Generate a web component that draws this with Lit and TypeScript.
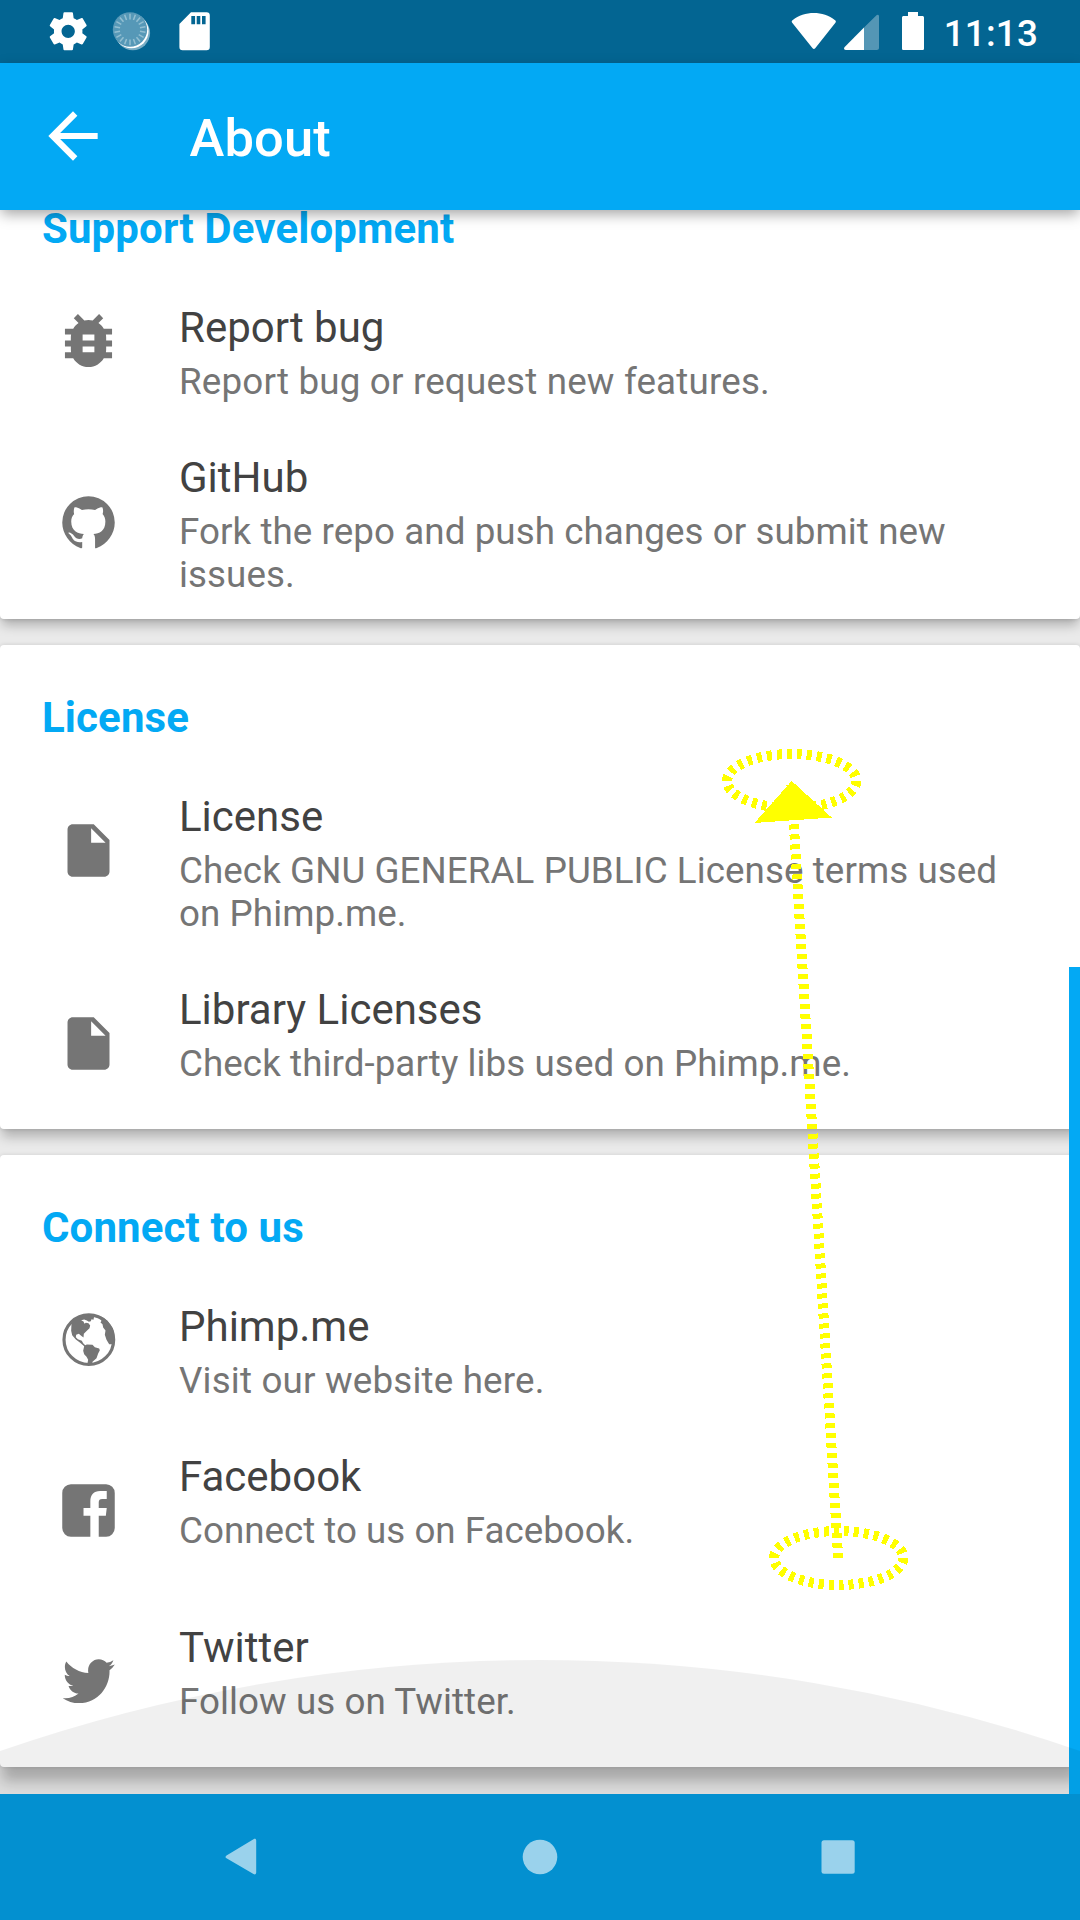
import { LitElement, html, svg, css, SVGTemplateResult } from "lit";
import { customElement, property } from "lit/decorators.js";

type IconName = "bug" | "github" | "file" | "globe" | "facebook" | "twitter";
type IconAlign = "high" | "mid" | "low";
type Tracking = "tight" | "normal" | "wide";

interface LinkRow {
  icon: IconName;
  align: IconAlign;
  title: string;
  text: string;
  tracking?: Tracking;
}

interface Section {
  heading: string;
  kind: string;
  rows: LinkRow[];
}

const SECTIONS: Section[] = [
  {
    heading: "Support Development",
    kind: "support",
    rows: [
      { icon: "bug", align: "high", title: "Report bug", text: "Report bug or request new features.", tracking: "wide" },
      { icon: "github", align: "low", title: "GitHub", text: "Fork the repo and push changes or submit new issues." },
    ],
  },
  {
    heading: "License",
    kind: "license",
    rows: [
      { icon: "file", align: "mid", title: "License", text: "Check GNU GENERAL PUBLIC License terms used on Phimp.me." },
      { icon: "file", align: "mid", title: "Library Licenses", text: "Check third-party libs used on Phimp.me." },
    ],
  },
  {
    heading: "Connect to us",
    kind: "connect",
    rows: [
      { icon: "globe", align: "high", title: "Phimp.me", text: "Visit our website here.", tracking: "wide" },
      { icon: "facebook", align: "mid", title: "Facebook", text: "Connect to us on Facebook.", tracking: "tight" },
      { icon: "twitter", align: "mid", title: "Twitter", text: "Follow us on Twitter." },
    ],
  },
];

const ICONS: Record<IconName, { box: string; body: SVGTemplateResult }> = {
  bug: {
    box: "1.3 1.3 21.4 21.4",
    body: svg`<path d="M20 8h-2.81c-.45-.78-1.07-1.45-1.82-1.96L17 4.41 15.59 3l-2.17 2.17C12.96 5.06 12.49 5 12 5c-.49 0-.96.06-1.41.17L8.41 3 7 4.41l1.62 1.63C7.88 6.55 7.26 7.22 6.81 8H4v2h2.09c-.05.33-.09.66-.09 1v1H4v2h2v1c0 .34.04.67.09 1H4v2h2.81c1.04 1.79 2.97 3 5.19 3s4.15-1.21 5.19-3H20v-2h-2.09c.05-.33.09-.66.09-1v-1h2v-2h-2v-1c0-.34-.04-.67-.09-1H20V8zm-6 8h-4v-2h4v2zm0-4h-4v-2h4v2z"/>`,
  },
  github: {
    box: "0 0 24 24",
    body: svg`<path d="M12 2A10 10 0 0 0 2 12c0 4.42 2.87 8.17 6.84 9.7.5.18.76.1.76-.2v-2.1c-2.9.5-3.6-1.3-4-1.9-.3-.6-.7-1-1.1-1.3-.5-.4.4-.6 1 .0.9.4 1.2 1.5 1.9 1.8.8.4 1.6.3 2.2.0.05-.7.3-1.3.67-1.6C7.95 16.17 5.42 15.31 5.42 11.6c0-1.11.4-2.1 1.13-2.81-.1-.25-.35-1.29.1-2.54 0 0 .94-.28 2.85 1.01.79-.22 1.65-.33 2.5-.33s1.71.11 2.5.33c1.91-1.29 2.8-1.01 2.8-1.01.5 1.25.15 2.29.05 2.54.65.71 1.08 1.7 1.08 2.81 0 3.72-2.34 4.56-4.57 4.81.36.31.64.92.64 1.85v3.34c0 .27.16.3.67.1C19.14 20.16 22 16.42 22 12A10 10 0 0 0 12 2z"/>`,
  },
  file: {
    box: "0 0 24 24",
    body: svg`<path d="M6 2c-1.1 0-1.99.9-1.99 2L4 20c0 1.1.89 2 1.99 2H18c1.1 0 2-.9 2-2V8l-6-6H6zm7 7V3.5L18.5 9H13z"/>`,
  },
  globe: {
    box: "22.5 7.5 189 189",
    body: svg`
      <circle cx="118" cy="102.5" r="74.5" fill="none" stroke="currentColor" stroke-width="9.5"/>
      <path d="M80 38L66 54 65 76 68 89 79 102 92 112 104 122 101 136 104 146 111 154 116 163 113 178 127 178 129 169 141 158 146 144 151 134 149 129 136 125 129 118 112 117 107 119 101 113 97 106 85 101 79 95 80 88 88 85 95 91 102 96 103 85 112 76 120 68 122 60 117 53 109 52 105 55 102 48 95 44 104 42 112 45 118 49 124 47 126 41 132 43 134 32 122 29 92 34z"/>
      <path d="M140 31L152 40 156 46 153 51 159 56 161 66 168 75 166 88 171 103 179 116 192 116 196 98 190 68 174 46 156 34z"/>`,
  },
  facebook: {
    box: "0 0 24 24",
    body: svg`<path fill-rule="evenodd" d="M5.3 2h13.4A3.3 3.3 0 0 1 22 5.3v13.4a3.3 3.3 0 0 1-3.3 3.3H15.9v-8h2.7l.35-3H15.9V8.9c0-.9.4-1.3 1.3-1.3h1.75v-3H16.4c-2.4 0-3.7 1.5-3.7 3.9V11h-2.6v3h2.6v8H5.3A3.3 3.3 0 0 1 2 18.7V5.3A3.3 3.3 0 0 1 5.3 2z"/>`,
  },
  twitter: {
    box: "0 0 24 24",
    body: svg`<path transform="translate(.7 -.35) scale(.95 .98)" d="M22.46 6c-.77.35-1.6.58-2.46.69.88-.53 1.56-1.37 1.88-2.38-.83.5-1.75.85-2.72 1.05C18.37 4.5 17.26 4 16 4c-2.35 0-4.27 1.92-4.27 4.29 0 .34.04.67.11.98C8.28 9.09 5.11 7.38 3 4.79c-.37.63-.58 1.37-.58 2.15 0 1.49.75 2.81 1.91 3.56-.71 0-1.37-.2-1.95-.5v.03c0 2.08 1.48 3.82 3.44 4.21-.36.1-.74.15-1.13.15-.27 0-.54-.03-.8-.08.54 1.69 2.11 2.95 4 2.98-1.46 1.16-3.31 1.84-5.33 1.84-.34 0-.68-.02-1.02-.06C3.44 20.29 5.7 21 8.12 21 16 21 20.33 14.46 20.33 8.79c0-.19 0-.37-.01-.56.84-.6 1.56-1.36 2.14-2.23z"/>`,
  },
};

/** Android status bar with notification icons on the left, signals and clock on the right. */
@customElement("status-bar")
class StatusBar extends LitElement {
  static styles = css`
    :host {
      display: flex;
      justify-content: space-between;
      height: 63px;
      background: #036592;
      color: #fff;
      font: 500 36.75px/43px Roboto, sans-serif;
    }
    svg { display: block; flex: none; }
    .right { display: flex; }
    .clock { padding: 12px 42px 0 0; letter-spacing: 0.2px; white-space: nowrap; }
  `;

  render() {
    const ticks = Array.from({ length: 18 }, (_, i) => i * 20);
    return html`
      <svg width="220" height="63" viewBox="0 0 220 63" fill="#fff">
        <g transform="translate(45.4 8.5) scale(1.9)">
          <path d="M19.43 12.98c.04-.32.07-.64.07-.98s-.03-.66-.07-.98l2.11-1.65c.19-.15.24-.42.12-.64l-2-3.46c-.12-.22-.39-.3-.61-.22l-2.49 1c-.52-.4-1.08-.73-1.69-.98l-.38-2.65C14.46 2.18 14.25 2 14 2h-4c-.25 0-.46.18-.49.42l-.38 2.65c-.61.25-1.17.59-1.69.98l-2.49-1c-.23-.09-.49 0-.61.22l-2 3.46c-.13.22-.07.49.12.64l2.11 1.65c-.04.32-.07.65-.07.98s.03.66.07.98l-2.11 1.65c-.19.15-.24.42-.12.64l2 3.46c.12.22.39.3.61.22l2.49-1c.52.4 1.08.73 1.69.98l.38 2.65c.03.24.24.42.49.42h4c.25 0 .46-.18.49-.42l.38-2.65c.61-.25 1.17-.59 1.69-.98l2.49 1c.23.09.49 0 .61-.22l2-3.46c.12-.22.07-.49-.12-.64l-2.11-1.65zM12 15.5c-1.93 0-3.5-1.57-3.5-3.5s1.57-3.5 3.5-3.5 3.5 1.57 3.5 3.5-1.57 3.5-3.5 3.5z"/>
        </g>
        <circle cx="132.8" cy="33" r="17.3" fill="#78adc5"/>
        <circle cx="131.4" cy="31" r="17.2"/>
        <circle cx="130" cy="29.5" r="17.2" fill="#5698b7"/>
        ${ticks.map((a) => svg`<path d="M130 13.8v5.6" stroke="#93bfd2" stroke-width="1.5" transform="rotate(${a} 130 29.5)"/>`)}
        <path fill-rule="evenodd" d="M191 12.3h15.6a3.2 3.2 0 0 1 3.2 3.2v31.6a3.2 3.2 0 0 1-3.2 3.2h-24a3.2 3.2 0 0 1-3.2-3.2V24zM191.3 16v8.3h3.8V16zM196.7 16v8.3h3.6V16zM202 16v8.3h3.6V16z"/>
      </svg>
      <div class="right">
        <svg width="154" height="63" viewBox="790 0 154 63" fill="#fff">
          <path d="M792.2 22.8c-.8-1-.6-1.800.3-2.500 12-9.700 30.600-9.700 42.600 0 .9.700 1.100 1.500.3 2.500L815.200 48.300c-.8 1-1.800 1-2.600 0z"/>
          <path d="M876.500 15.300c1-1 2.500-.5 2.500 1v31.500c0 1.400-.8 2.200-2.200 2.200H864V27.500z" opacity=".32"/>
          <path d="M864 27.500V50h-18c-2 0-2.600-1.500-1.300-3z"/>
          <path d="M908 12h10v4h4.400c.9 0 1.600.7 1.600 1.600v30.800c0 .9-.7 1.600-1.600 1.600h-18.800c-.9 0-1.600-.7-1.600-1.600V17.600c0-.9.7-1.600 1.600-1.600H908z"/>
        </svg>
        <span class="clock">11:13</span>
      </div>
    `;
  }
}

/** One card of the about list. */
@customElement("about-card")
class AboutCard extends LitElement {
  @property({ attribute: false }) section!: Section;

  static styles = css`
    :host { display: block; flex: none; }
    .card {
      background: #fff;
      border-radius: 4px;
      padding: 48px 42px 44px;
      font-family: Roboto, sans-serif;
      box-shadow: 0 8px 12px -2px rgba(0, 0, 0, 0.26), 0 0 4px rgba(0, 0, 0, 0.16);
    }
    .support { padding-bottom: 23px; }
    .license { box-shadow: 0 10px 12px -2px rgba(0, 0, 0, 0.24), 0 0 4px rgba(0, 0, 0, 0.14); }
    .connect { box-shadow: 0 16px 14px -2px rgba(0, 0, 0, 0.24), 0 0 4px rgba(0, 0, 0, 0.12); }
    .heading {
      margin: 0 0 50px;
      font-size: 42px;
      font-weight: 700;
      line-height: 49px;
      letter-spacing: 0.12px;
      color: #03a9f4;
    }
    .rows { display: flex; flex-direction: column; gap: 50px; }
    .row { display: flex; align-items: flex-start; color: #757575; }
    .connect .row:last-child { margin-top: 20.5px; }
    /* The icon may hang lower than the two text lines without stretching its row. */
    .icon {
      flex: none;
      width: 63px;
      height: 63px;
      margin: 0 59px -40px 15px;
      fill: currentColor;
    }
    .high { margin-top: 6px; }
    .mid { margin-top: 27px; }
    .low { margin-top: 38px; }
    .title { font-size: 42px; line-height: 49px; color: #424242; }
    .text { margin-top: 8px; font-size: 36.75px; line-height: 43px; }
    .normal { letter-spacing: 0.07px; }
    .wide { letter-spacing: 0.18px; }
  `;

  render() {
    const s = this.section;
    return html`
      <section class="card ${s.kind}">
        <h2 class="heading">${s.heading}</h2>
        <div class="rows">
          ${s.rows.map(
            (r) => html`
              <div class="row">
                <svg class="icon ${r.align}" viewBox=${ICONS[r.icon].box}>${ICONS[r.icon].body}</svg>
                <div>
                  <div class="title">${r.title}</div>
                  <div class="text ${r.tracking ?? "normal"}">${r.text}</div>
                </div>
              </div>
            `
          )}
        </div>
      </section>
    `;
  }
}

@customElement("app-root")
class AppRoot extends LitElement {
  static styles = css`
    :host {
      display: flex;
      flex-direction: column;
      position: relative;
      width: 1080px;
      height: 1920px;
      overflow: hidden;
      background: #eaeaea;
      font-family: Roboto, sans-serif;
    }
    status-bar { flex: none; }
    .appbar {
      flex: none;
      display: flex;
      align-items: center;
      height: 147px;
      background: #03a9f4;
      color: #fff;
      z-index: 1;
      box-shadow: 0 5px 13px -1px rgba(0, 0, 0, 0.36);
    }
    .back { width: 74px; height: 74px; margin: 0 80px 1px 35.5px; fill: #fff; }
    .page-title {
      margin: 3px 0 0;
      font-size: 52.5px;
      font-weight: 500;
      line-height: 62px;
      letter-spacing: 0.1px;
    }
    .content {
      flex: 1;
      min-height: 0;
      display: flex;
      flex-direction: column;
      gap: 26px;
      position: relative;
      overflow: hidden;
    }
    .content about-card:first-child { margin-top: -54px; }
    .scrollbar {
      position: absolute;
      right: 0;
      bottom: 0;
      width: 11px;
      height: 827px;
      background: #03a9f4;
    }
    .glow { position: absolute; left: 0; bottom: 0; width: 1080px; height: 134px; }
    .navbar {
      flex: none;
      display: flex;
      justify-content: space-between;
      align-items: center;
      height: 126px;
      padding: 0 208px;
      box-sizing: border-box;
      background: #0390d0;
      fill: rgba(255, 255, 255, 0.6);
    }
    .navbar svg { width: 63px; height: 63px; }
    .gesture { position: absolute; left: 0; top: 0; width: 1080px; height: 1920px; pointer-events: none; }
  `;

  render() {
    return html`
      <status-bar></status-bar>
      <header class="appbar">
        <svg class="back" viewBox="0 0 24 24"><path d="M20 11H7.83l5.59-5.59L12 4l-8 8 8 8 1.410-1.410L7.830 13H20v-2z"/></svg>
        <h1 class="page-title">About</h1>
      </header>
      <main class="content">
        ${SECTIONS.map((s) => html`<about-card .section=${s}></about-card>`)}
        <div class="scrollbar"></div>
        <svg class="glow" viewBox="0 0 1080 134">
          <path d="M0 91A1648 1648 0 0 1 1080 91V134H0z" fill="#000" fill-opacity=".06"/>
        </svg>
      </main>
      <nav class="navbar">
        <svg viewBox="0 0 63 63"><path d="M45.500 13.200c1.500-.9 2.700-.2 2.700 1.400v32c0 1.600-1.200 2.300-2.700 1.400L18.500 32.300c-1.300-.8-1.300-2 0-2.800z"/></svg>
        <svg viewBox="0 0 63 63"><circle cx="31" cy="31" r="17.300"/></svg>
        <svg viewBox="0 0 63 63"><rect x="12.500" y="14.300" width="33.200" height="33.400" rx="2.500"/></svg>
      </nav>
      <svg class="gesture" viewBox="0 0 1080 1920" shape-rendering="crispEdges" fill="none" stroke="#ff0" stroke-width="10" stroke-dasharray="5 5">
        <ellipse cx="791.700" cy="781" rx="64.700" ry="27"/>
        <ellipse cx="838.700" cy="1558" rx="64.700" ry="27"/>
        <path d="M838.200 1558L791.200 781"/>
        <path d="M791.700 781L754.500 823L831.700 817.500z" fill="#ff0" stroke="none"/>
      </svg>
    `;
  }
}
